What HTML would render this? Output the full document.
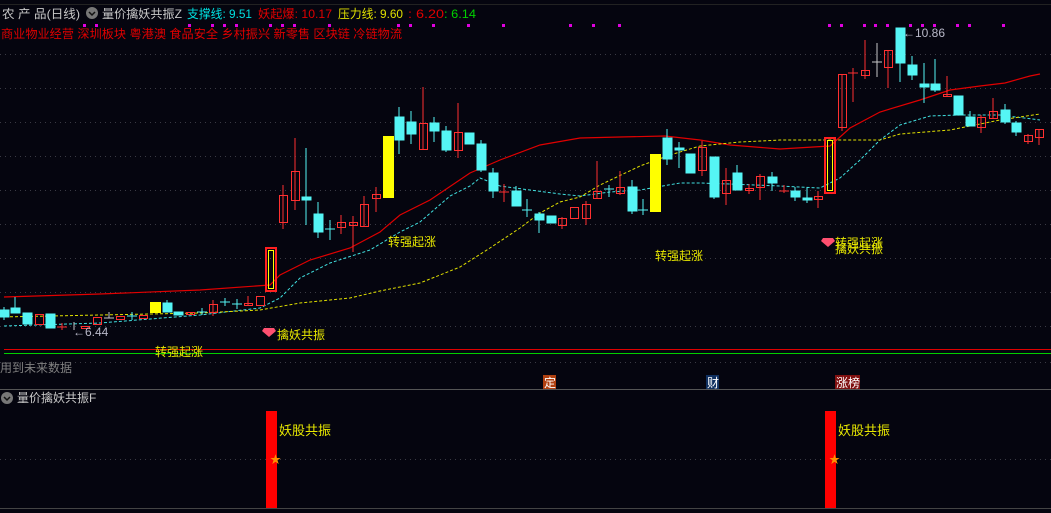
<!DOCTYPE html>
<html><head><meta charset="utf-8"><style>
html,body{margin:0;padding:0;background:#05050f;width:1051px;height:513px;overflow:hidden}
svg{display:block}
text{font-family:"Liberation Sans","Noto Sans CJK SC",sans-serif}
</style></head><body>
<svg width="1051" height="513" viewBox="0 0 1051 513" xmlns="http://www.w3.org/2000/svg">
<rect width="1051" height="513" fill="#05050f"/>
<g stroke="#3a3a44" stroke-dasharray="1,4" stroke-width="1">
<line x1="0" y1="54.5" x2="1051" y2="54.5"/><line x1="0" y1="88.5" x2="1051" y2="88.5"/>
<line x1="0" y1="122.5" x2="1051" y2="122.5"/><line x1="0" y1="156.5" x2="1051" y2="156.5"/>
<line x1="0" y1="190.5" x2="1051" y2="190.5"/><line x1="0" y1="224.5" x2="1051" y2="224.5"/>
<line x1="0" y1="258.5" x2="1051" y2="258.5"/><line x1="0" y1="292.5" x2="1051" y2="292.5"/>
<line x1="0" y1="326.5" x2="1051" y2="326.5"/><line x1="0" y1="362.5" x2="1051" y2="362.5"/>
<line x1="0" y1="459.5" x2="1051" y2="459.5"/>
</g>
<line x1="0" y1="4.5" x2="1051" y2="4.5" stroke="#222" />
<line x1="0" y1="389.5" x2="1051" y2="389.5" stroke="#555"/>
<line x1="0" y1="508.5" x2="1051" y2="508.5" stroke="#444"/>
<line x1="4" y1="349.5" x2="1051" y2="349.5" stroke="#e00000"/>
<line x1="4" y1="353.5" x2="1051" y2="353.5" stroke="#00d000"/>

<!-- header -->
<text x="2" y="18" font-size="12" fill="#c8c8c8" textLength="78" lengthAdjust="spacingAndGlyphs">农 产 品(日线)</text>
<circle cx="92" cy="13" r="6" fill="#777"/><path d="M89 12 l3 3 l3 -3" stroke="#111" stroke-width="1.5" fill="none"/>
<text x="102" y="18" font-size="12" fill="#c8c8c8" textLength="80" lengthAdjust="spacingAndGlyphs">量价擒妖共振Z</text>
<text x="187" y="18" font-size="12" fill="#00e0e0" textLength="65" lengthAdjust="spacingAndGlyphs">支撑线: 9.51</text>
<text x="258" y="18" font-size="12" fill="#e00000" textLength="74" lengthAdjust="spacingAndGlyphs">妖起爆: 10.17</text>
<text x="338" y="18" font-size="12" fill="#e0e000" textLength="65" lengthAdjust="spacingAndGlyphs">压力线: 9.60</text>
<text x="408" y="18" font-size="12" fill="#e00000" textLength="36" lengthAdjust="spacingAndGlyphs">: 6.20</text>
<text x="444" y="18" font-size="12" fill="#00d000" textLength="32" lengthAdjust="spacingAndGlyphs">: 6.14</text>
<text x="1" y="38" font-size="12" fill="#e00000" textLength="401" lengthAdjust="spacingAndGlyphs">商业物业经营 深圳板块 粤港澳 食品安全 乡村振兴 新零售 区块链 冷链物流</text>
<g fill="#e000e0">
<rect x="83" y="24" width="3" height="3"/><rect x="95" y="24" width="3" height="3"/><rect x="188" y="24" width="3" height="3"/><rect x="211" y="24" width="3" height="3"/><rect x="223" y="24" width="3" height="3"/><rect x="235" y="24" width="3" height="3"/><rect x="269" y="24" width="3" height="3"/><rect x="281" y="24" width="3" height="3"/><rect x="293" y="24" width="3" height="3"/><rect x="328" y="24" width="3" height="3"/><rect x="397" y="24" width="3" height="3"/><rect x="409" y="24" width="3" height="3"/><rect x="432" y="24" width="3" height="3"/><rect x="467" y="24" width="3" height="3"/><rect x="502" y="24" width="3" height="3"/><rect x="569" y="24" width="3" height="3"/><rect x="592" y="24" width="3" height="3"/><rect x="618" y="24" width="3" height="3"/><rect x="828" y="24" width="3" height="3"/><rect x="840" y="24" width="3" height="3"/><rect x="863" y="24" width="3" height="3"/><rect x="874" y="24" width="3" height="3"/><rect x="886" y="24" width="3" height="3"/><rect x="909" y="24" width="3" height="3"/><rect x="921" y="24" width="3" height="3"/><rect x="933" y="24" width="3" height="3"/><rect x="956" y="24" width="3" height="3"/><rect x="968" y="24" width="3" height="3"/><rect x="1002" y="24" width="3" height="3"/>
</g>

<!-- MA lines -->
<polyline fill="none" stroke="#e00000" stroke-width="1.2" points="4,297 100,294 200,290 270,285 280,275 310,260 350,248 380,232 400,215 430,200 470,173 500,160 540,145 580,138 620,137 665,136 700,140 730,145 780,149 830,146 850,128 880,112 920,100 950,90 980,86 1005,83 1030,76 1040,74"/>
<polyline fill="none" stroke="#40e0e0" stroke-width="1" stroke-dasharray="3,2" points="4,326 100,323 200,315 260,308 280,298 300,278 330,263 370,250 400,232 420,222 450,196 470,186 480,178 500,186 530,190 560,194 580,196 610,192 640,190 680,183 700,183 730,184 780,186 820,188 840,178 860,160 880,140 900,125 930,116 960,115 1000,115 1040,120"/>
<polyline fill="none" stroke="#e0e000" stroke-width="1" stroke-dasharray="3,2" points="0,317 100,315 200,313 260,310 300,303 350,298 380,291 420,283 460,267 490,248 520,228 540,213 560,202 580,197 600,185 640,166 670,155 700,146 740,142 780,140 840,140 880,140 900,134 950,130 980,124 1000,120 1040,114"/>

<g>
<g fill="#55f5f5" stroke="#55f5f5">
<line x1="4" y1="307" x2="4" y2="320"/><rect x="0" y="310" width="9" height="7"/>
<line x1="15" y1="297" x2="15" y2="313"/><rect x="11" y="308" width="9" height="5"/>
<rect x="23" y="313" width="9" height="11"/>
<rect x="46" y="314" width="9" height="14"/>
<line x1="132" y1="312" x2="132" y2="320"/><line x1="127" y1="316" x2="137" y2="316"/>
<line x1="167" y1="300" x2="167" y2="312"/><rect x="163" y="303" width="9" height="9"/>
<rect x="174" y="312" width="9" height="3"/>
<line x1="202" y1="308" x2="202" y2="315"/><line x1="197" y1="312" x2="207" y2="312"/>
<line x1="225" y1="298" x2="225" y2="306"/><line x1="220" y1="302" x2="230" y2="302"/>
<line x1="237" y1="299" x2="237" y2="309"/><line x1="232" y1="304" x2="242" y2="304"/>
<line x1="306" y1="148" x2="306" y2="225"/><rect x="302" y="197" width="9" height="3"/>
<line x1="318" y1="202" x2="318" y2="238"/><rect x="314" y="214" width="9" height="18"/>
<line x1="330" y1="220" x2="330" y2="240"/><line x1="325" y1="229" x2="335" y2="229"/>
<line x1="399" y1="107" x2="399" y2="154"/><rect x="395" y="117" width="9" height="23"/>
<line x1="411" y1="111" x2="411" y2="144"/><rect x="407" y="122" width="9" height="12"/>
<line x1="434" y1="117" x2="434" y2="142"/><rect x="430" y="123" width="9" height="8"/>
<line x1="446" y1="126" x2="446" y2="152"/><rect x="442" y="131" width="9" height="19"/>
<rect x="465" y="133" width="9" height="11"/>
<line x1="481" y1="140" x2="481" y2="172"/><rect x="477" y="144" width="9" height="26"/>
<line x1="493" y1="168" x2="493" y2="198"/><rect x="489" y="173" width="9" height="18"/>
<line x1="516" y1="186" x2="516" y2="206"/><rect x="512" y="191" width="9" height="15"/>
<line x1="527" y1="199" x2="527" y2="217"/><line x1="522" y1="210" x2="532" y2="210"/>
<line x1="539" y1="212" x2="539" y2="233"/><rect x="535" y="214" width="9" height="6"/>
<rect x="547" y="216" width="9" height="7"/>
<line x1="609" y1="185" x2="609" y2="197"/><line x1="604" y1="189" x2="614" y2="189"/>
<line x1="632" y1="180" x2="632" y2="214"/><rect x="628" y="187" width="9" height="24"/>
<line x1="643" y1="199" x2="643" y2="215"/><line x1="638" y1="210" x2="648" y2="210"/>
<line x1="667" y1="129" x2="667" y2="165"/><rect x="663" y="138" width="9" height="21"/>
<line x1="679" y1="142" x2="679" y2="168"/><rect x="675" y="148" width="9" height="2"/>
<rect x="686" y="154" width="9" height="19"/>
<line x1="714" y1="157" x2="714" y2="199"/><rect x="710" y="157" width="9" height="40"/>
<line x1="737" y1="165" x2="737" y2="190"/><rect x="733" y="173" width="9" height="17"/>
<line x1="772" y1="172" x2="772" y2="191"/><rect x="768" y="177" width="9" height="6"/>
<line x1="795" y1="187" x2="795" y2="201"/><rect x="791" y="191" width="9" height="6"/>
<line x1="807" y1="187" x2="807" y2="203"/><rect x="803" y="198" width="9" height="2"/>
<line x1="900" y1="28" x2="900" y2="82"/><rect x="896" y="28" width="9" height="35"/>
<line x1="912" y1="56" x2="912" y2="80"/><rect x="908" y="65" width="9" height="10"/>
<line x1="924" y1="63" x2="924" y2="103"/><rect x="920" y="84" width="9" height="3"/>
<line x1="935" y1="59" x2="935" y2="92"/><rect x="931" y="84" width="9" height="6"/>
<rect x="954" y="96" width="9" height="19"/>
<line x1="970" y1="111" x2="970" y2="126"/><rect x="966" y="117" width="9" height="9"/>
<line x1="1005" y1="104" x2="1005" y2="124"/><rect x="1001" y="110" width="9" height="12"/>
<line x1="1016" y1="121" x2="1016" y2="136"/><rect x="1012" y="123" width="9" height="9"/>
</g>
<g fill="none" stroke="#ff3030">
<rect x="35.5" y="314.5" width="8" height="10"/>
<line x1="62" y1="323" x2="62" y2="330"/><line x1="57" y1="327" x2="67" y2="327"/>
<rect x="81.5" y="326.5" width="8" height="2"/>
<rect x="93.5" y="317.5" width="8" height="7"/>
<rect x="116.5" y="316.5" width="8" height="3"/>
<rect x="139.5" y="315.5" width="8" height="3"/>
<rect x="186.5" y="312.5" width="8" height="2"/>
<line x1="213" y1="300" x2="213" y2="316"/><rect x="209.5" y="304.5" width="8" height="8"/>
<line x1="248" y1="296" x2="248" y2="305"/><rect x="244.5" y="303.5" width="8" height="2"/>
<rect x="256.5" y="296.5" width="8" height="9"/>
<line x1="283" y1="185" x2="283" y2="229"/><rect x="279.5" y="195.5" width="8" height="27"/>
<line x1="295" y1="138" x2="295" y2="210"/><rect x="291.5" y="171.5" width="8" height="29"/>
<line x1="341" y1="215" x2="341" y2="234"/><rect x="337.5" y="222.5" width="8" height="5"/>
<line x1="353" y1="216" x2="353" y2="252"/><rect x="349.5" y="222.5" width="8" height="3"/>
<line x1="364" y1="196" x2="364" y2="227"/><rect x="360.5" y="204.5" width="8" height="22"/>
<line x1="376" y1="187" x2="376" y2="212"/><rect x="372.5" y="194.5" width="8" height="4"/>
<line x1="423" y1="87" x2="423" y2="149"/><rect x="419.5" y="123.5" width="8" height="26"/>
<line x1="458" y1="103" x2="458" y2="158"/><rect x="454.5" y="132.5" width="8" height="18"/>
<line x1="504" y1="184" x2="504" y2="202"/><line x1="499" y1="192" x2="509" y2="192"/>
<line x1="562" y1="217" x2="562" y2="229"/><rect x="558.5" y="218.5" width="8" height="7"/>
<rect x="570.5" y="207.5" width="8" height="11"/>
<line x1="586" y1="201" x2="586" y2="225"/><rect x="582.5" y="204.5" width="8" height="14"/>
<line x1="597" y1="161" x2="597" y2="199"/><rect x="593.5" y="191.5" width="8" height="7"/>
<line x1="620" y1="171" x2="620" y2="195"/><rect x="616.5" y="187.5" width="8" height="6"/>
<line x1="702" y1="141" x2="702" y2="176"/><rect x="698.5" y="147.5" width="8" height="23"/>
<line x1="726" y1="168" x2="726" y2="205"/><rect x="722.5" y="180.5" width="8" height="13"/>
<line x1="749" y1="184" x2="749" y2="194"/><rect x="745.5" y="188.5" width="8" height="2"/>
<line x1="760" y1="174" x2="760" y2="200"/><rect x="756.5" y="176.5" width="8" height="11"/>
<line x1="784" y1="185" x2="784" y2="193"/><line x1="779" y1="191" x2="789" y2="191"/>
<line x1="818" y1="191" x2="818" y2="208"/><rect x="814.5" y="196.5" width="8" height="3"/>
<line x1="842" y1="74" x2="842" y2="131"/><rect x="838.5" y="74.5" width="8" height="53"/>
<line x1="853" y1="68" x2="853" y2="102"/><line x1="848" y1="73" x2="858" y2="73"/>
<line x1="865" y1="40" x2="865" y2="79"/><rect x="861.5" y="70.5" width="8" height="5"/>
<line x1="888" y1="50" x2="888" y2="88"/><rect x="884.5" y="50.5" width="8" height="17"/>
<line x1="947" y1="76" x2="947" y2="97"/><rect x="943.5" y="94.5" width="8" height="2"/>
<line x1="981" y1="115" x2="981" y2="133"/><rect x="977.5" y="117.5" width="8" height="10"/>
<line x1="993" y1="98" x2="993" y2="119"/><rect x="989.5" y="111.5" width="8" height="7"/>
<line x1="1028" y1="134" x2="1028" y2="144"/><rect x="1024.5" y="135.5" width="8" height="6"/>
<line x1="1039" y1="129" x2="1039" y2="145"/><rect x="1035.5" y="129.5" width="8" height="8"/>
</g>
<g stroke="#c8c8c8"><line x1="109" y1="312" x2="109" y2="318"/><line x1="104" y1="318" x2="114" y2="318"/>
<line x1="877" y1="43" x2="877" y2="77"/><line x1="872" y1="62" x2="882" y2="62"/><line x1="74" y1="322" x2="74" y2="330"/></g>
<g fill="#ffff00"><rect x="150" y="302" width="11" height="11"/><rect x="383" y="136" width="11" height="62"/><rect x="650" y="154" width="11" height="58"/></g>
<rect x="266" y="248" width="10" height="43" fill="none" stroke="#ff2020" stroke-width="2"/>
<rect x="268.5" y="250.5" width="5" height="38" fill="none" stroke="#ffff00"/>
<rect x="825" y="138" width="10" height="55" fill="none" stroke="#ff2020" stroke-width="2"/>
<rect x="827.5" y="140.5" width="5" height="50" fill="none" stroke="#ffff00"/>
</g>

<g font-size="12" fill="#e8e800">
<text x="155" y="356">转强起涨</text>
<text x="388" y="246">转强起涨</text>
<text x="655" y="260">转强起涨</text>
<text x="835" y="247">转强起涨</text>
<text x="277" y="339">擒妖共振</text>
<text x="835" y="253">擒妖共振</text>
</g>
<path d="M264 328 h10 l2 3 l-7 6 l-7 -6 z" fill="#ff5070"/>
<path d="M823 238 h10 l2 3 l-7 6 l-7 -6 z" fill="#ff5070"/>
<text x="73" y="336" font-size="12" fill="#b8b8c8">←6.44</text>
<text x="903" y="37" font-size="12" fill="#b8b8c8">←10.86</text>

<text x="0" y="372" font-size="12" fill="#808080">用到未来数据</text>
<rect x="543" y="375" width="13" height="14" fill="#b04010"/><text x="544" y="387" font-size="12" fill="#fff">定</text>
<rect x="706" y="375" width="13" height="14" fill="#103060"/><text x="707" y="387" font-size="12" fill="#fff">财</text>
<rect x="835" y="375" width="25" height="14" fill="#801010"/><text x="836" y="387" font-size="12" fill="#fff">涨榜</text>

<circle cx="7" cy="398" r="6" fill="#777"/><path d="M4 397 l3 3 l3 -3" stroke="#111" stroke-width="1.5" fill="none"/>
<text x="17" y="402" font-size="12" fill="#c8c8c8">量价擒妖共振F</text>
<rect x="266" y="411" width="11" height="97" fill="#ff0000"/>
<rect x="825" y="411" width="11" height="97" fill="#ff0000"/>
<text x="279" y="435" font-size="13" fill="#e8e800">妖股共振</text>
<text x="838" y="435" font-size="13" fill="#e8e800">妖股共振</text>
<text x="270" y="463" font-size="11" fill="#ff9000">★</text>
<text x="829" y="463" font-size="11" fill="#ff9000">★</text>
</svg>
</body></html>
